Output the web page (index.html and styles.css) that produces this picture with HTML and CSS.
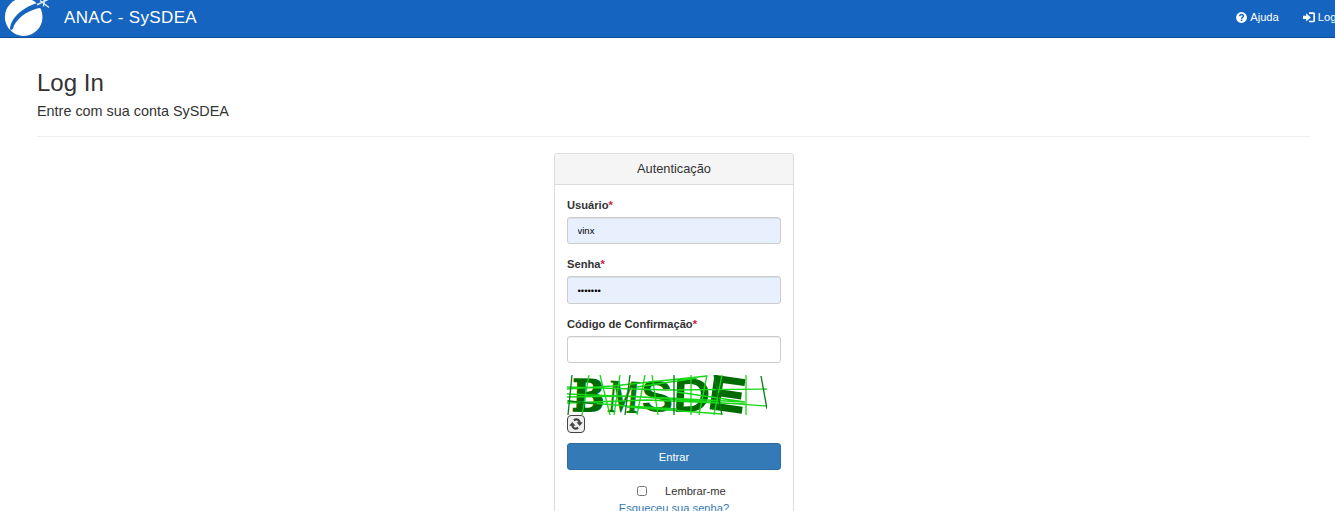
FILE: index.html
```html
<!DOCTYPE html>
<html lang="pt-BR">
<head>
<meta charset="utf-8">
<title>ANAC - SySDEA</title>
<link rel="stylesheet" href="styles.css">
</head>
<body>
<header class="navbar">
  <svg class="logo" width="64" height="37" viewBox="0 0 64 37">
    <ellipse cx="23.700" cy="17" rx="18.800" ry="18.900" fill="#fff"/>
    <path d="M10.500 30.500C8 22 21 7 38 3L42 7.500C26 10 15 20 12.800 29Z" fill="#1565c0"/>
    <path d="M37 4.800L49 -1M40 .5L49 7.500M44.500 -1L43.500 6.500" stroke="#fff" stroke-opacity=".85" stroke-width="1.500" fill="none"/>
  </svg>
  <span class="brand">ANAC - SySDEA</span>
  <nav class="links">
    <a class="link"><svg width="11" height="11" viewBox="0 0 11 11"><circle cx="5.500" cy="5.500" r="5.400" fill="#fff"/><path d="M3.700 4.300C3.700 2 7.400 2 7.400 4.100C7.400 5.400 5.600 5.300 5.600 6.700M5.600 7.600V9.100" stroke="#1565c0" stroke-width="1.500" fill="none"/></svg>Ajuda</a>
    <a class="link"><svg width="12" height="11" viewBox="0 0 12 11"><path d="M0 3.800H3.200V1.200L7.800 5.400L3.200 9.600V7H0Z" fill="#fff"/><path d="M6 1.200H10.200Q11.200 1.200 11.200 2.200V8.500Q11.200 9.500 10.200 9.500H6" fill="none" stroke="#fff" stroke-width="1.700"/></svg>Login</a>
  </nav>
</header>
<main class="page">
  <h1 class="title">Log In</h1>
  <p class="subtitle">Entre com sua conta SySDEA</p>
  <hr class="rule">
  <section class="panel">
    <h2 class="panel-heading">Autenticação</h2>
    <form class="panel-body">
      <label class="label" for="user">Usuário<span class="required">*</span></label>
      <input class="field filled" id="user" type="text" value="vinx">
      <label class="label" for="pass">Senha<span class="required">*</span></label>
      <input class="field filled tall" id="pass" type="password" value="segredo">
      <label class="label" for="code">Código de Confirmação<span class="required">*</span></label>
      <input class="field" id="code" type="text">
      <svg class="captcha" width="200" height="40" viewBox="0 0 200 40">
        <g class="glyphs">
          <text class="slab bold" transform="matrix(.88 .01 -.03 1 4.500 36)" font-size="44">B</text>
          <text class="serif" transform="matrix(.68 .03 -.1 1 40 37)" font-size="48">M</text>
          <text class="sans" transform="matrix(1.020 .04 .03 .94 74.500 36)" font-size="47">S</text>
          <text class="sans" transform="matrix(1.080 -.02 -.04 1 105.500 37)" font-size="48">D</text>
          <text class="sans bold" transform="matrix(1.200 .17 -.15 1.060 140 33)" font-size="45">E</text>
        </g>
        <g class="strokes">
          <path d="M0 14L45 11L140 1M0 12L100 15L200 14M0 19L100 23L178 27M0 22L60 21L200 31M0 26L60 31L110 34M0 28L80 25L178 29M60 32L155 39M110 17L178 27M70 12L130 3"/>
          <path d="M22 0L15 40M33 0L39 24L43 40M53 0L47 40M78 0L70 40M85 0L91 40M124 0V40M140 0L132 40M155 0L147 40M179 0V40"/>
          <path class="deep" d="M5 0L1 40M63 0L58 40M147 0L155 40M194 1L200 34M107 0V40M1 26L30 29"/>
        </g>
      </svg>
      <button class="refresh" type="button" aria-label="Atualizar"><svg width="14" height="14" viewBox="0 0 14 14"><path d="M4.800 3.200Q8.500 1 10.300 4.200L10.700 6M9.200 10.800Q5.500 13 3.700 9.800L3.300 8" fill="none" stroke="#444" stroke-width="2.200"/><path d="M7.500 5.300H13.800L10.700 9ZM.2 8.700H6.500L3.300 5Z" fill="#444"/></svg></button>
      <button class="submit" type="button">Entrar</button>
      <label class="remember"><input class="check" type="checkbox">Lembrar-me</label>
      <a class="forgot">Esqueceu sua senha?</a>
    </form>
  </section>
</main>
</body>
</html>
```
FILE: styles.css
```css
* { box-sizing: border-box; }
html, body { height: 100%; overflow: hidden; }
body {
  margin: 0;
  font: 11.15px/16px "Liberation Sans", Arial, sans-serif;
  color: #333;
  background: #fff;
}
.navbar {
  display: flex;
  align-items: center;
  height: 38px;
  background: #1565c0;
  border-bottom: 1px solid #0d4d99;
  color: #fff;
  overflow: hidden;
}
.logo { flex: none; }
.brand { font-size: 17px; letter-spacing: .35px; line-height: 20px; padding-bottom: 1px; white-space: nowrap; }
.links {
  display: flex;
  gap: 24px;
  margin-left: auto;
  margin-right: -10px;
  padding-bottom: 3px;
}
.link { display: flex; align-items: center; gap: 3px; white-space: nowrap; }
.page { padding: 30px 24px 0 37px; }
.title { margin: 0; font-size: 24px; line-height: 30px; font-weight: 400; }
.subtitle { margin: 3px 0 0; font-size: 14.4px; line-height: 20px; }
.rule { margin: 15px 0 0; border: 0; border-top: 1px solid #eee; }
.panel {
  width: 240px;
  height: 358px;
  margin: 16px auto 0;
  border: 1px solid #ddd;
  border-bottom: 0;
  border-radius: 3px 3px 0 0;
}
.panel-heading {
  margin: 0;
  height: 31px;
  font-size: 12.8px;
  font-weight: 400;
  line-height: 30px;
  text-align: center;
  background: #f5f5f5;
  border-bottom: 1px solid #ddd;
}
.panel-body { display: flex; flex-direction: column; padding: 12px 12px 0; }
.label { height: 20px; font-weight: 700; line-height: 16px; }
.required { color: #d0213f; }
.field {
  width: 100%;
  height: 27px;
  margin: 0 0 12px;
  padding: 0 9.5px;
  border: 1px solid #ccc;
  border-radius: 3px;
  font: 9.5px "Liberation Sans", Arial, sans-serif;
  color: #000;
  box-shadow: inset 0 1px 1px rgba(0, 0, 0, .075);
}
.filled { background: #e8f0fe; }
.tall { height: 28px; }
.captcha { display: block; overflow: hidden; }
.glyphs { fill: #006b00; }
.slab { font-family: "DejaVu Serif", serif; font-weight: 700; }
.serif { font-family: "Liberation Serif", serif; font-weight: 700; fill: #087808; }
.sans { font-family: "Liberation Sans", Arial, sans-serif; font-weight: 700; }
.bold { stroke: #006b00; stroke-width: 1.5; }
.strokes { fill: none; stroke: #18d818; stroke-width: 1.3; }
.deep { stroke: #087b18; }
.refresh {
  display: flex;
  align-items: center;
  justify-content: center;
  width: 18px;
  height: 18px;
  margin: 0 0 10px;
  padding: 0;
  border: 1px solid #444;
  border-radius: 4px;
  background: #eee;
}
.submit {
  height: 27px;
  padding: 0;
  border: 1px solid #2e6da4;
  border-radius: 3px;
  background: #337ab7;
  color: #fff;
  font: 11.15px "Liberation Sans", Arial, sans-serif;
}
.remember { display: flex; align-items: center; height: 16px; margin-top: 13px; padding-left: 70px; }
.check { width: 10px; height: 10px; margin: 0 18px 0 0; }
.forgot { align-self: center; margin-top: 1px; color: #337ab7; }
```
